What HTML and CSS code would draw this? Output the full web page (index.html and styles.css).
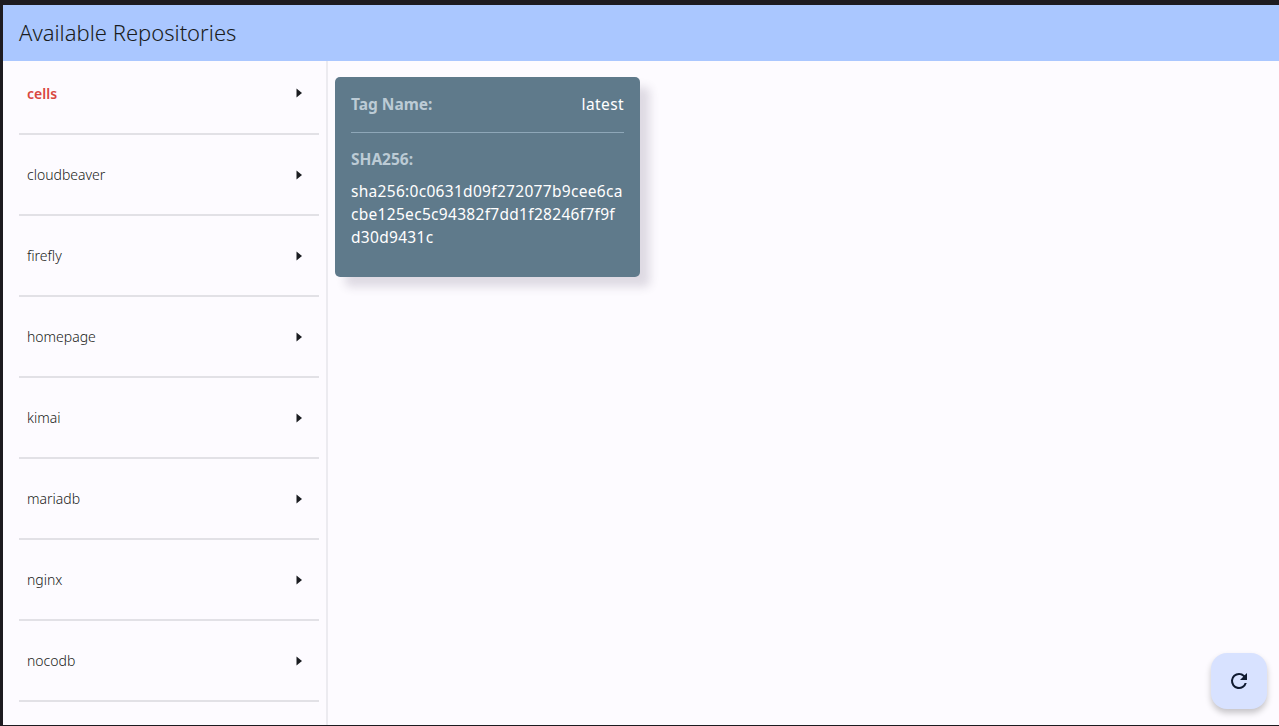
FILE: index.html
```html
<!DOCTYPE html>
<html lang="en">
<head>
<meta charset="utf-8">
<title>Available Repositories</title>
<link rel="stylesheet" href="styles.css">
</head>
<body>
<div class="app">
  <header class="topbar"><h1 class="title">Available Repositories</h1></header>
  <div class="main">
    <nav class="sidebar">
      <div class="repo repo-active"><span>cells</span><svg class="caret" viewBox="0 0 6 10"><path d="M0.5 0.5L6 5L0.5 9.5Z"/></svg></div>
      <div class="repo"><span>cloudbeaver</span><svg class="caret" viewBox="0 0 6 10"><path d="M0.5 0.5L6 5L0.5 9.5Z"/></svg></div>
      <div class="repo"><span>firefly</span><svg class="caret" viewBox="0 0 6 10"><path d="M0.5 0.5L6 5L0.5 9.5Z"/></svg></div>
      <div class="repo"><span>homepage</span><svg class="caret" viewBox="0 0 6 10"><path d="M0.5 0.5L6 5L0.5 9.5Z"/></svg></div>
      <div class="repo"><span>kimai</span><svg class="caret" viewBox="0 0 6 10"><path d="M0.5 0.5L6 5L0.5 9.5Z"/></svg></div>
      <div class="repo"><span>mariadb</span><svg class="caret" viewBox="0 0 6 10"><path d="M0.5 0.5L6 5L0.5 9.5Z"/></svg></div>
      <div class="repo"><span>nginx</span><svg class="caret" viewBox="0 0 6 10"><path d="M0.5 0.5L6 5L0.5 9.5Z"/></svg></div>
      <div class="repo"><span>nocodb</span><svg class="caret" viewBox="0 0 6 10"><path d="M0.5 0.5L6 5L0.5 9.5Z"/></svg></div>
    </nav>
    <section class="content">
      <article class="card">
        <div class="card-row"><span class="label">Tag Name:</span><span class="value">latest</span></div>
        <div class="card-rule"></div>
        <div class="label sha-label">SHA256:</div>
        <div class="sha">sha256:0c0631d09f272077b9cee6ca<br>cbe125ec5c94382f7dd1f28246f7f9f<br>d30d9431c</div>
      </article>
    </section>
  </div>
  <button class="fab" aria-label="Refresh">
    <svg class="fab-icon" viewBox="0 0 24 24"><path d="M17.65 6.35A7.96 7.96 0 0 0 12 4a8 8 0 1 0 7.73 10h-2.08A6 6 0 1 1 12 6c1.66 0 3.14.69 4.22 1.78L13 11h7V4l-2.35 2.35z"/></svg>
  </button>
</div>
</body>
</html>
```
FILE: styles.css
```css
* { box-sizing: border-box; }
html, body { height: 100%; }
body {
  margin: 0;
  padding: 5px 0 1px 3px;
  background: #1d1b20;
  font-family: "Noto Sans", sans-serif;
  overflow: hidden;
}
.app {
  position: relative;
  height: 720px;
  display: flex;
  flex-direction: column;
  background: #fdfbff;
  overflow: hidden;
}
.topbar {
  height: 56px;
  flex: none;
  display: flex;
  align-items: center;
  padding: 0 16px 2px;
  background: #aac7ff;
}
.title {
  margin: 0;
  font-size: 22px;
  font-weight: 300;
  color: #1a1c20;
}
.main { flex: 1; display: flex; min-height: 0; }
.sidebar {
  width: 325px;
  flex: none;
  padding: 0 7px 0 16px;
  border-right: 2px solid #ecebf0;
}
.repo {
  height: 81px;
  padding: 0 17px 0 8px;
  display: flex;
  align-items: center;
  justify-content: space-between;
  border-bottom: 2px solid #e2e1e6;
  font-size: 14px;
  font-weight: 300;
  color: #1a1c20;
}
.repo-active { height: 74px; font-weight: 600; color: #d9473f; padding-bottom: 8px; }
.caret { width: 6px; height: 10px; fill: #1a1c20; flex: none; }
.content { flex: 1; padding: 16px 7px; }
.card {
  width: 305px;
  height: 200px;
  padding: 16px;
  background: #5f7a8b;
  border-radius: 5px;
  box-shadow: 10px 10px 10px rgba(60, 50, 80, 0.16);
  color: #ffffff;
  font-size: 16px;
}
.card-row {
  height: 39px;
  padding-bottom: 17px;
  display: flex;
  justify-content: space-between;
  align-items: center;
  line-height: 22px;
}
.label { font-weight: 700; font-size: 15.5px; color: #bccbd5; }
.value { font-weight: 400; font-size: 15.5px; letter-spacing: 0.4px; }
.card-rule { height: 1px; background: #8ea7b8; }
.sha-label { margin-top: 15px; line-height: 22px; }
.sha {
  margin-top: 10px;
  line-height: 23px;
  font-weight: 400;
  font-size: 15.5px;
  letter-spacing: 0.3px;
  white-space: nowrap;
}
.fab {
  position: absolute;
  right: 12px;
  bottom: 16px;
  width: 56px;
  height: 56px;
  padding: 0;
  border: 0;
  border-radius: 16px;
  background: #d8e2ff;
  box-shadow: 0 4px 6px rgba(0, 0, 0, 0.22);
  display: flex;
  align-items: center;
  justify-content: center;
}
.fab-icon { width: 24px; height: 24px; fill: #0f1a30; }
```
